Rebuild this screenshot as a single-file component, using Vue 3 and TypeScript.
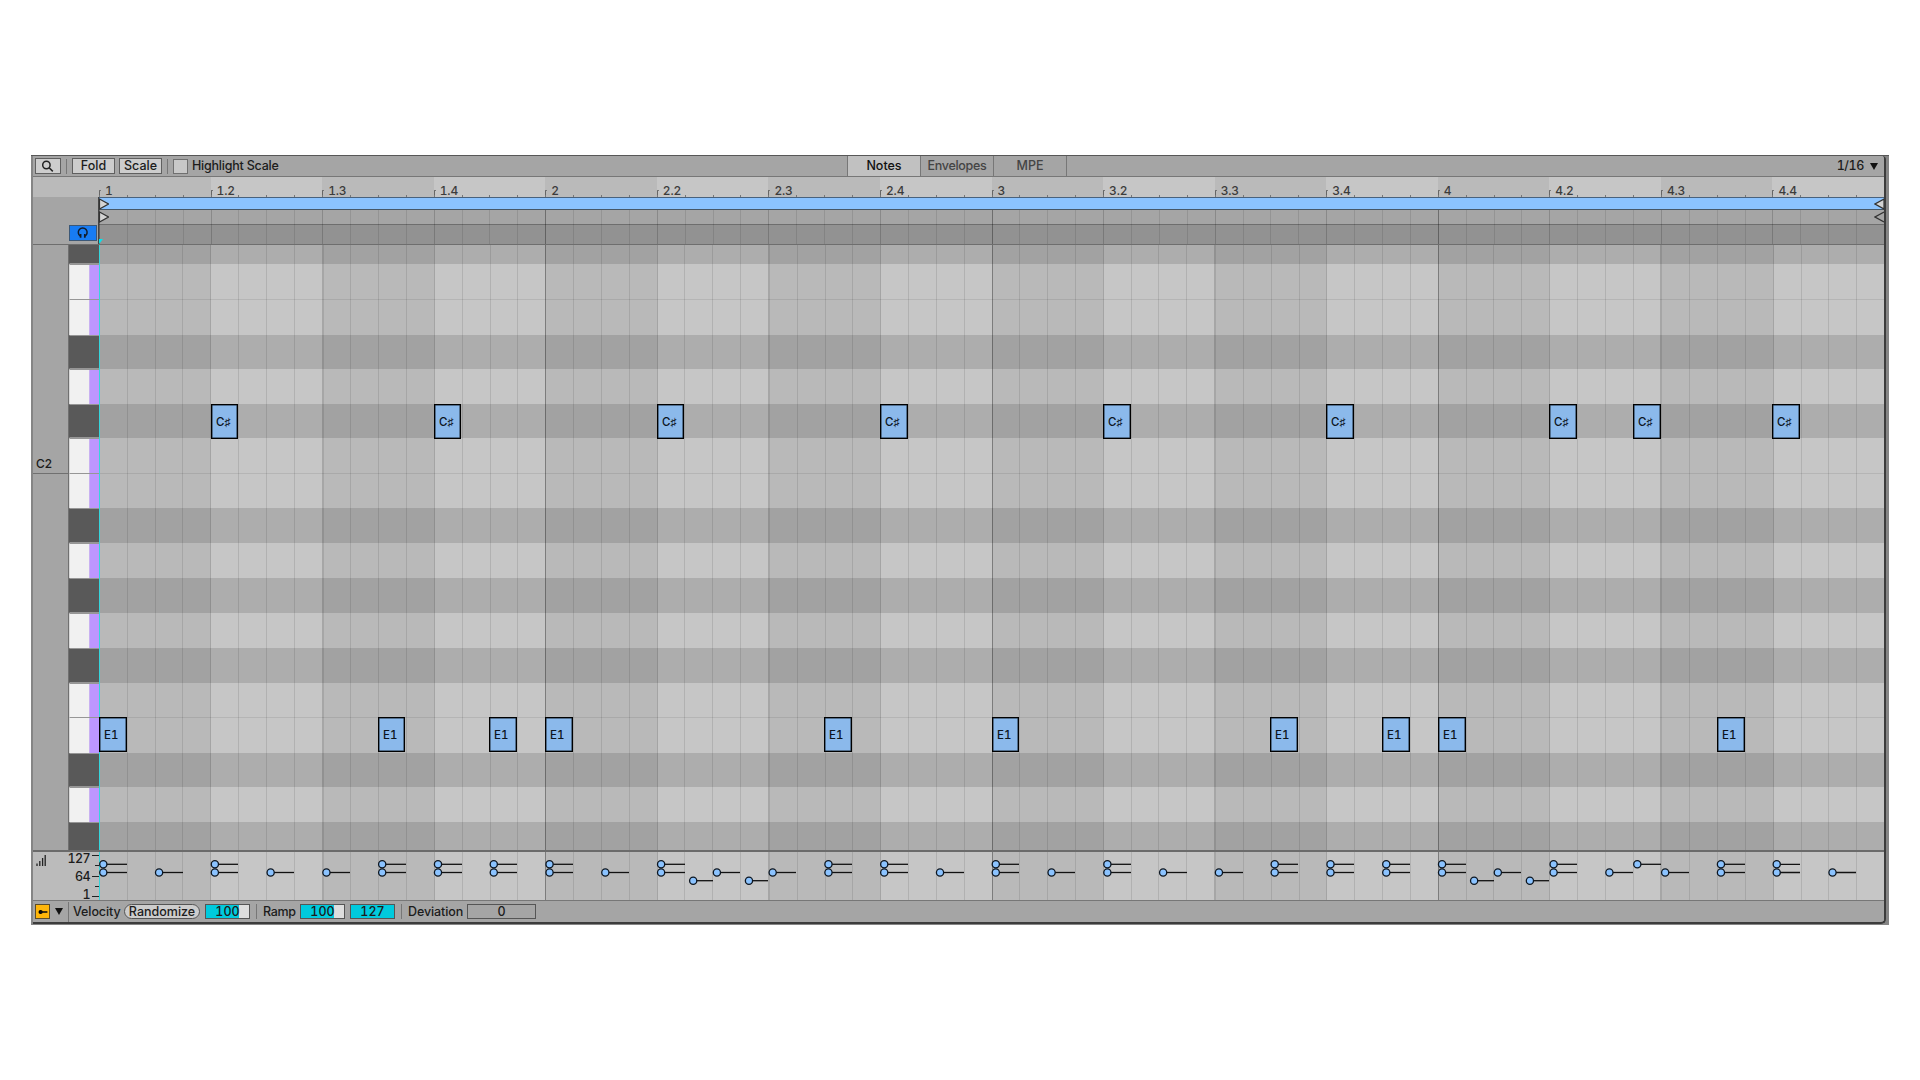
<script setup lang="ts">
interface ClipNote { id: string; label: string; kind: 'clap' | 'kick'; left: number; width: number }
interface Stem { x: number; y: number; end: number }

const STEP = 1785 / 64

const cells = Array.from({ length: 64 }, (_, i) => ({
  id: i,
  shaded: Math.floor(i / 4) % 2 === 0,
  beat: i % 4 === 0,
  half: i % 8 === 0,
  bar: i % 16 === 0,
}))

const beats = Array.from({ length: 16 }, (_, i) => {
  const bar = Math.floor(i / 4) + 1
  const beat = (i % 4) + 1
  return { id: i, label: beat === 1 ? `${bar}` : `${bar}.${beat}`, shaded: i % 2 === 0 }
})

// Row edges measured from the top of the note area; b = black key, w = white key
const edges = [0, 19, 54, 90, 124, 159, 193, 228, 263, 298, 333, 368, 403, 438, 472, 508, 542, 577, 605]
const pattern = 'bwwbwbwwbwbwbwwbwb'
const rows = pattern.split('').map((k, i) => ({
  id: i,
  black: k === 'b',
  joined: k === 'w' && pattern[i - 1] === 'w',
  height: edges[i + 1] - edges[i],
}))

const clapSteps = [4, 12, 20, 28, 36, 44, 52, 55, 60]
const kickSteps = [0, 10, 14, 16, 26, 32, 42, 46, 48, 58]

function note(step: number, label: string, kind: ClipNote['kind']): ClipNote {
  const left = Math.round(step * STEP)
  const right = Math.round(step * STEP * 1.0003 + 27.5)
  return { id: `${kind}${step}`, label, kind, left, width: right - left }
}
const notes: ClipNote[] = [
  ...clapSteps.map((s) => note(s, 'C♯', 'clap')),
  ...kickSteps.map((s) => note(s, 'E1', 'kick')),
]

function stem(step: number, y: number): Stem {
  return { x: step * STEP + 4.3, y, end: Math.round((Math.floor(step) + 1) * STEP) }
}
const stems: Stem[] = [
  ...[...clapSteps, ...kickSteps].map((s) => stem(s, 12.3)),
  ...Array.from({ length: 32 }, (_, i) => stem(i * 2, 20.5)),
  ...[21.15, 23.15, 49.15, 51.15].map((s) => stem(s, 28.7)),
]
</script>

<template>
  <main class="clip">
    <div class="panel">
      <header class="toolbar">
        <div class="tools">
          <button class="btn search" aria-label="Search">
            <svg width="14" height="13" viewBox="0 0 14 13"><circle cx="5.4" cy="5" r="3.7" /><path d="M8.1 7.7 L11.8 11.4" /></svg>
          </button>
          <i class="sep s1"></i>
          <button class="btn fold"><span>Fold</span></button>
          <button class="btn scale"><span>Scale</span></button>
          <i class="sep s2"></i>
          <i class="check"></i>
          <span class="highlight">Highlight Scale</span>
        </div>
        <nav class="tabs">
          <span class="tab on">Notes</span>
          <span class="tab env">Envelopes</span>
          <span class="tab">MPE</span>
        </nav>
        <div class="quant"><span>1/16</span><svg width="8" height="7"><path d="M0 0H8L4 7Z" fill="#111" /></svg></div>
      </header>

      <div class="ruler">
        <div class="gutter shade"></div>
        <div class="beats">
          <div v-for="b in beats" :key="b.id" class="mark" :class="{ shade: b.shaded }">
            <i class="flag"></i><span>{{ b.label }}</span>
            <div class="ticks"><i v-for="n in 4" :key="n"></i></div>
          </div>
        </div>
      </div>

      <div class="strips">
        <div class="gutter phones">
          <button class="preview" aria-label="Preview">
            <svg width="12" height="12" viewBox="0 0 12 12"><path d="M3.4 9.2A4.4 4.4 0 1 1 8 9.2" /><path d="M3.6 7V10.8M7.8 7V10.8" stroke-width="1.7" /></svg>
          </button>
        </div>
        <div class="lanes">
          <div class="loop">
            <svg class="tri" width="10" height="12"><path d="M.5 1 9.5 6 .5 11Z" /></svg>
            <svg class="tri" width="10" height="12"><path d="M10 1 1 6 10 11Z" /></svg>
          </div>
          <div class="markers">
            <svg class="tri" width="10" height="13"><path d="M.5 2 9.5 7 .5 12Z" /></svg>
            <svg class="tri hollow" width="10" height="13"><path d="M10 2 1 7 10 12" /></svg>
          </div>
          <div class="scrub"></div>
          <div class="cells"><i v-for="c in cells" :key="c.id" :class="{ bar: c.bar, beat: c.beat }"></i></div>
          <svg class="insert" width="4" height="5"><path d="M0 0H4L0 5Z" fill="#00e6ef" /></svg>
        </div>
      </div>

      <section class="roll">
        <div class="octaves"><span>C2</span></div>
        <div class="keys">
          <div v-for="r in rows" :key="r.id" class="key" :class="{ black: r.black }" :style="{ height: r.height + 'px' }"></div>
        </div>
        <div class="field">
          <div v-for="r in rows" :key="r.id" class="row" :class="{ black: r.black, joined: r.joined }" :style="{ height: r.height + 'px' }"></div>
          <div class="cells"><i v-for="c in cells" :key="c.id" :class="{ shaded: c.shaded, beat: c.beat, half: c.half, bar: c.bar }"></i></div>
          <i class="cursor"></i>
          <div v-for="n in notes" :key="n.id" class="note" :class="n.kind" :style="{ left: n.left + 'px', width: n.width + 'px' }">{{ n.label }}</div>
        </div>
      </section>

      <section class="velocity">
        <div class="axis">
          <svg class="bars" width="10" height="12"><path d="M1 8.5V11M3.8 6V11M6.6 3V11M9.2 0V11" /></svg>
          <div class="values"><span>127</span><span>64</span><span>1</span></div>
          <div class="dashes"><i></i><i></i><i></i><i></i><i></i></div>
        </div>
        <div class="field">
          <div class="cells"><i v-for="c in cells" :key="c.id" :class="{ shaded: c.shaded, beat: c.beat, half: c.half, bar: c.bar }"></i></div>
          <i class="cursor"></i>
          <svg class="stems" width="1785" height="48">
            <g v-for="(s, i) in stems" :key="i">
              <line :x1="s.x" :x2="s.end" :y1="s.y" :y2="s.y" />
              <circle :cx="s.x" :cy="s.y" r="3.6" />
            </g>
          </svg>
        </div>
      </section>

      <footer class="footer">
        <i class="lane"><svg width="10" height="8"><circle cx="2.6" cy="4" r="2.1" /><path d="M2 4H9.4" stroke="#111" stroke-width="1.6" /></svg></i>
        <svg class="drop" width="8" height="7"><path d="M0 0H8L4 7Z" fill="#111" /></svg>
        <i class="edge"></i>
        <span class="t vel">Velocity</span>
        <button class="pill"><span>Randomize</span></button>
        <span class="num part">100</span>
        <i class="sep"></i>
        <span class="t ramp">Ramp</span>
        <span class="num part">100</span>
        <span class="num second">127</span>
        <i class="sep"></i>
        <span class="t dev">Deviation</span>
        <span class="num zero">0</span>
      </footer>
    </div>
  </main>
</template>

<style>
body { background: #fff; }
</style>

<style scoped>
* { box-sizing: border-box; }
i { font-style: normal; }
button { appearance: none; border: 0; padding: 0; margin: 0; font: inherit; color: inherit; letter-spacing: inherit; }
.clip {
  margin: 155px 0 0 31px; width: 1858px; height: 770px; background: #858585;
  border-top: 1px solid #575757; padding-left: 2px; overflow: hidden;
  font: 500 12.5px/16px Inter, "Liberation Sans", sans-serif; color: #1c1c1c;
  font-variant-numeric: tabular-nums;
}
.panel {
  width: 1853px; height: 768px; border-right: 2px solid #3c3c3c; border-bottom: 2px solid #3c3c3c;
  border-radius: 0 4px 5px 0; overflow: hidden; background: #a5a5a5;
}
.toolbar { height: 21px; display: flex; border-bottom: 1px solid #777; background: #a5a5a5; }
.tools { width: 814px; display: flex; align-items: center; padding-left: 2px; }
.btn { height: 16px; border: 1px solid #606060; background: #cdcdcd; display: flex; align-items: center; justify-content: center; }
.btn span, .highlight, .quant span { padding-top: .5px; }
.search { width: 26px; }
.search svg { fill: none; stroke: #222; stroke-width: 1.5; }
.sep { width: 1px; height: 15px; background: #777; flex: none; }
.s1, .s2 { margin: 0 5px; }
.fold { width: 43px; margin-right: 4px; }
.scale { width: 43px; }
.check { width: 15px; height: 15px; border: 1px solid #707070; background: #c8c8c8; margin-right: 4px; }
.highlight { letter-spacing: -.22px; white-space: nowrap; }
.tabs { display: flex; border-left: 1px solid #777; }
.tab { width: 73px; border-right: 1px solid #777; text-align: center; line-height: 20px; height: 20px; color: #444; }
.tab.on { background: #c1c1c1; color: #111; }
.tab.env { letter-spacing: -.3px; }
.quant { margin-left: auto; padding-right: 6px; display: flex; align-items: center; gap: 6px; letter-spacing: -.4px; }
.gutter { width: 66px; flex: none; }
.ruler { display: flex; height: 20px; background: #c6c6c6; color: #3c3c3c; }
.shade { background: #bababa; }
.beats { flex: 1; display: flex; }
.mark { flex: 1 1 0; position: relative; display: flex; padding-top: 6px; font-size: 12px; }
.flag { width: 2px; height: 7px; margin-top: 7px; border-left: 1px solid #666; border-top: 1px solid #777; flex: none; }
.mark span { margin-left: 4px; letter-spacing: -.15px; }
.ticks { position: absolute; left: 0; right: 0; bottom: 0; height: 2px; display: flex; }
.ticks i { flex: 1; border-left: 1px solid #777; }
.strips { display: flex; height: 48px; border-bottom: 1px solid #6e6e6e; }
.phones { display: flex; align-items: flex-end; justify-content: flex-end; padding: 0 1px 3px 0; border-right: 1px solid #444; }
.preview { width: 28px; height: 16px; background: #187cf3; border: 1px solid #3c5877; display: flex; align-items: center; justify-content: center; }
.preview svg { fill: none; stroke: #111c2c; stroke-width: 1.5; }
.lanes { flex: 1; position: relative; }
.loop { height: 13px; background: #8bc3ff; border-top: 1px solid #49627d; border-bottom: 1px solid #465767; display: flex; justify-content: space-between; position: relative; z-index: 1; }
.markers { height: 14px; display: flex; justify-content: space-between; }
.tri { fill: #d4d4d4; stroke: #333; stroke-width: 1.2; flex: none; position: relative; z-index: 2; }
.tri.hollow { fill: none; }
.scrub { height: 20px; background: #929292; border-top: 1px solid #6e6e6e; }
.cells { position: absolute; inset: 0; display: flex; }
.cells i { flex: 1 1 0; border-left: 1px solid rgba(0, 0, 0, .1); }
.cells .shaded { background: rgba(0, 0, 0, .062); }
.cells .beat { border-left-color: rgba(0, 0, 0, .17); }
.cells .half { border-left: 2px solid rgba(0, 0, 0, .1); }
.cells .bar { border-left: 1px solid rgba(0, 0, 0, .33); }
.insert { position: absolute; left: 0; bottom: 0; }
.roll { display: flex; height: 605px; }
.octaves { width: 36px; border-right: 1px solid #707070; font-size: 12px; }
.octaves span { display: block; height: 229px; padding: 211px 0 0 3px; border-bottom: 1px solid #707070; letter-spacing: -.3px; }
.keys { width: 30px; }
.key { border-top: 1px solid #969696; border-left: 1px solid #d8d8d8; background: linear-gradient(90deg, #f1f1f1 19px, #d5cce4 19px, #bd96ff 20px); }
.key.black { background: #595959; border-left-color: #595959; border-bottom: 1px solid #969696; }
.key:first-child { border-top: 0; }
.key:last-child { border-bottom: 0; }
.field { flex: 1; position: relative; background: #c6c6c6; }
.row.black { background: #adadad; }
.row.joined { border-top: 1px solid #b5b5b5; }
.cursor { position: absolute; left: 0; top: 0; bottom: 0; width: 1px; background: #35d5dc; }
.note { position: absolute; height: 35px; border: 1px solid #000; background: #8bb9eb; color: #0c141d; font-size: 11.5px; font-weight: 550; line-height: 34px; padding-left: 4px; white-space: nowrap; box-shadow: inset 0 0 0 .5px #1b2733; }
.clap { top: 159px; }
.kick { top: 472px; }
.velocity { display: flex; height: 51px; border-top: 2px solid #6b6b6b; border-bottom: 1px solid #777; }
.axis { width: 66px; display: flex; background: #bbb; flex: none; }
.bars { margin: 3px 0 0 3px; stroke: #222; stroke-width: 1.3; flex: none; }
.values { width: 44px; height: 48px; text-align: right; display: flex; flex-direction: column; line-height: 18px; margin-top: -2px; letter-spacing: -.6px; }
.dashes { flex: 1; display: flex; flex-direction: column; align-items: flex-end; justify-content: space-between; height: 42px; margin-top: 3px; }
.dashes i { width: 7px; height: 1px; background: #222; }
.dashes i:nth-child(even) { width: 4px; }
.stems { position: absolute; left: 0; top: 0; }
.stems line { stroke: #111; stroke-width: 1.3; }
.stems circle { fill: #8bc3ff; stroke: #0d1620; stroke-width: 1.3; }
.footer { height: 20px; display: flex; align-items: center; white-space: nowrap; background: #a5a5a5; padding-top: 1px; }
.lane { width: 15px; height: 15px; margin-left: 2px; border: 1px solid #5d4d28; background: #ffb60a; display: flex; align-items: center; justify-content: center; }
.drop { margin-left: 5px; }
.edge { width: 1px; height: 20px; background: #777; margin-left: 5px; }
.t { flex: none; }
.vel { margin-left: 4px; width: 51px; letter-spacing: -.1px; }
.pill { width: 76px; height: 15px; border: 1px solid #555; border-radius: 8px; background: #cdcdcd; display: flex; justify-content: center; align-items: center; margin-right: 5px; flex: none; }
.num { width: 45px; height: 15px; border: 1px solid #555; background: #00cadd; text-align: center; line-height: 14px; flex: none; }
.num + .sep { margin: 0 6px; }
.ramp { width: 37px; letter-spacing: -.3px; }
.num.second { margin-left: 5px; }
.dev { width: 59px; letter-spacing: -.1px; }
.num.part { background: linear-gradient(90deg, #00cadd 33px, #dedede 33px); }
.num.zero { width: 69px; background: #a5a5a5; }
</style>
